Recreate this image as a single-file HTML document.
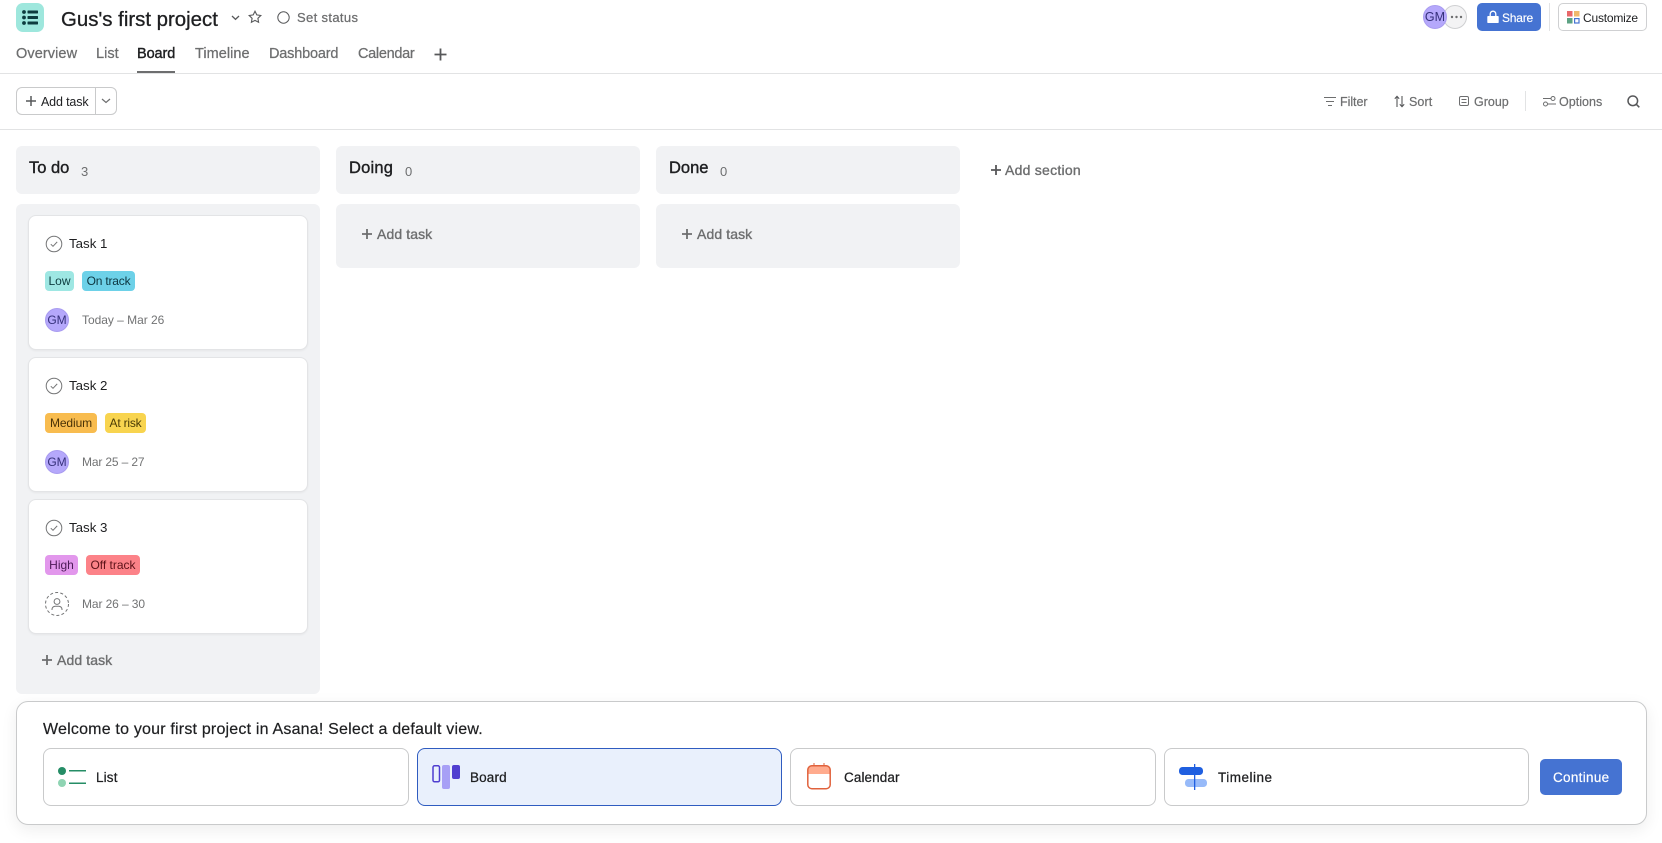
<!DOCTYPE html>
<html lang="en"><head><meta charset="utf-8"><title>Gus's first project - Asana</title>
<style>
*{box-sizing:border-box}
html,body{margin:0;padding:0;background:#fff;width:1662px;height:843px;overflow:hidden}
body{position:relative;font-family:"Liberation Sans",sans-serif;color:#1e1f21}
.t{position:absolute;white-space:nowrap;line-height:20px;height:20px}
.b{position:absolute}
svg{position:absolute;overflow:visible}
.tab{font-size:14.5px;color:#6d6e6f;top:44px;-webkit-text-stroke:.25px}
.tool{font-size:12.5px;color:#6d6e6f;top:92px;-webkit-text-stroke:.2px}
.col{position:absolute;background:#f1f2f4;border-radius:6px}
.card{position:absolute;left:28px;width:280px;height:135px;background:#fff;border:1px solid #e3e4e6;border-radius:8px;box-shadow:0 1px 2px rgba(0,0,0,.05)}
.tn{font-size:13.3px;color:#1e1f21}
.tag{position:absolute;height:20px;border-radius:4px;font-size:12px;line-height:20px;text-align:center;white-space:nowrap}
.av{position:absolute;left:45px;width:24px;height:24px;border-radius:50%;background:#b5a8fb;border:1px solid #a99cf0;color:#35307a;font-size:12px;line-height:22px;text-align:center}
.d{font-size:12px;color:#727374;letter-spacing:-.03px}
.sec{font-size:16.5px;color:#1e1f21;-webkit-text-stroke:.4px;top:158px}
.cnt{font-size:13px;color:#6d6e6f;top:162px}
.add{font-size:14px;color:#6d6e6f;-webkit-text-stroke:.35px;letter-spacing:.1px}
.opt{position:absolute;top:748px;height:58px;border:1px solid #c9cacb;border-radius:8px;background:#fff}
.ol{font-size:13.5px;color:#1e1f21;top:768px;-webkit-text-stroke:.25px}
</style></head>
<body>
<!-- logo -->
<div class="b" style="left:16px;top:3px;width:28px;height:29px;border-radius:7px;background:#9ee7dd"></div>
<svg style="left:16px;top:3px" width="28" height="29" fill="#0d3b3e"><circle cx="8" cy="9" r="1.900"/><circle cx="8" cy="14.500" r="1.900"/><circle cx="8" cy="20" r="1.900"/><rect x="11.500" y="7.500" width="10.500" height="3" rx=".6"/><rect x="11.500" y="13" width="10.500" height="3" rx=".6"/><rect x="11.500" y="18.500" width="10.500" height="3" rx=".6"/></svg>
<div class="t" style="left:61px;top:10px;font-size:20.400px;-webkit-text-stroke:.3px;line-height:20px">Gus's first project</div>
<svg style="left:231px;top:15px" width="9" height="6" fill="none" stroke="#57585a" stroke-width="1.300"><path d="M1 1l3.500 3.300L8 1"/></svg>
<svg style="left:248px;top:10px" width="14" height="14" fill="none" stroke="#57585a" stroke-width="1.100"><path d="M7 1.200l1.800 3.700 4 .6-2.900 2.800.7 4L7 10.400l-3.600 1.900.7-4L1.200 5.500l4-.6z"/></svg>
<svg style="left:277px;top:11px" width="13" height="13" fill="none" stroke="#57585a" stroke-width="1"><circle cx="6.500" cy="6.500" r="5.700"/></svg>
<div class="t" style="left:297px;top:8px;font-size:13px;color:#6d6e6f;-webkit-text-stroke:.25px;letter-spacing:.35px">Set status</div>

<div class="t tab" style="left:16px;letter-spacing:.09px">Overview</div>
<div class="t tab" style="left:96px;letter-spacing:.05px">List</div>
<div class="t tab" style="left:137px;color:#1e1f21;-webkit-text-stroke:.4px;letter-spacing:-.1px">Board</div>
<div class="t tab" style="left:195px;letter-spacing:.04px">Timeline</div>
<div class="t tab" style="left:269px;letter-spacing:-.18px">Dashboard</div>
<div class="t tab" style="left:358px;letter-spacing:-.3px">Calendar</div>
<svg style="left:433px;top:47px" width="15" height="15" stroke="#57585a" stroke-width="1.800"><path d="M7.500 1.500v12M1.500 7.500h12"/></svg>
<div class="b" style="left:0;top:73px;width:1662px;height:1px;background:#e2e3e4"></div>
<div class="b" style="left:137px;top:71px;width:38px;height:2px;background:#6d6e6f"></div>

<!-- header right -->
<div class="b" style="left:1443px;top:5px;width:24px;height:24px;border-radius:50%;background:#f3f3f4;border:1px solid #cfd0d2"></div>
<svg style="left:1449px;top:15px" width="14" height="4" fill="#6d6e6f"><circle cx="3" cy="2" r="1.200"/><circle cx="7.500" cy="2" r="1.200"/><circle cx="12" cy="2" r="1.200"/></svg>
<div class="av" style="left:1423px;top:5px;line-height:22px;font-size:12.500px">GM</div>
<div class="b" style="left:1477px;top:3px;width:64px;height:28px;border-radius:5px;background:#4573d2"></div>
<svg style="left:1487px;top:10px" width="12" height="14" fill="#fff"><rect x=".3" y="6" width="11.400" height="7" rx=".8"/><path d="M3.200 6.500V4a2.800 2.800 0 0 1 5.600 0v2.500" fill="none" stroke="#fff" stroke-width="1.300"/></svg>
<div class="t" style="left:1502px;top:8px;font-size:12px;color:#fff;-webkit-text-stroke:.15px;letter-spacing:-.2px">Share</div>
<div class="b" style="left:1549px;top:3px;width:1px;height:28px;background:#e2e3e4"></div>
<div class="b" style="left:1558px;top:3px;width:89px;height:28px;border-radius:5px;border:1px solid #cfd0d2;background:#fff"></div>
<svg style="left:1567px;top:11px" width="13" height="13"><rect width="5.500" height="5.500" fill="#e8686a"/><rect x="7" width="5.500" height="5.500" fill="#f0b96b"/><rect y="7" width="5.500" height="5.500" fill="#5da283"/><rect x="7.600" y="7.600" width="4.400" height="4.400" fill="none" stroke="#4573d2" stroke-width="1.200"/></svg>
<div class="t" style="left:1583px;top:8px;font-size:12px;letter-spacing:-.2px">Customize</div>

<!-- toolbar -->
<div class="b" style="left:16px;top:87px;width:101px;height:28px;border:1px solid #c9cacb;border-radius:6px;background:#fff"></div>
<div class="b" style="left:95px;top:87px;width:1px;height:28px;background:#c9cacb"></div>
<svg style="left:25px;top:95px" width="12" height="12" stroke="#57585a" stroke-width="1.500"><path d="M6 1v10M1 6h10"/></svg>
<div class="t" style="left:41px;top:92px;font-size:12.500px;letter-spacing:-.15px">Add task</div>
<svg style="left:101px;top:98px" width="10" height="6" fill="none" stroke="#6d6e6f" stroke-width="1.200"><path d="M1 1l4 3.500L9 1"/></svg>

<svg style="left:1324px;top:96px" width="12" height="11" stroke="#6d6e6f" stroke-width="1.100"><path d="M0 1.500h12M2 5.500h8M4 9.500h4"/></svg>
<div class="t tool" style="left:1340px;letter-spacing:-.05px">Filter</div>
<svg style="left:1394px;top:95px" width="11" height="13" fill="none" stroke="#57585a" stroke-width="1.100"><path d="M3 12V1.500M.8 3.700L3 1.300l2.200 2.400M8 1v10.500M5.800 9.300L8 11.700l2.200-2.400"/></svg>
<div class="t tool" style="left:1409px;letter-spacing:.1px">Sort</div>
<svg style="left:1459px;top:96px" width="10" height="10" fill="none" stroke="#6d6e6f" stroke-width="1"><rect x=".5" y=".5" width="9" height="9" rx="1.500"/><path d="M2.500 3.500h5M2.500 6.500h5"/></svg>
<div class="t tool" style="left:1474px">Group</div>
<div class="b" style="left:1525px;top:91px;width:1px;height:20px;background:#e2e3e4"></div>
<svg style="left:1543px;top:96px" width="13" height="11" fill="none" stroke="#6d6e6f" stroke-width="1"><circle cx="10" cy="2.500" r="2"/><circle cx="2.500" cy="8" r="2"/><path d="M0 2.500h8M5 8h8"/></svg>
<div class="t tool" style="left:1559px;letter-spacing:.02px">Options</div>
<svg style="left:1627px;top:95px" width="13" height="13" fill="none" stroke="#57585a" stroke-width="1.500"><circle cx="5.800" cy="5.800" r="4.800"/><path d="M9.300 9.300l3 3"/></svg>
<div class="b" style="left:0;top:129px;width:1662px;height:1px;background:#e2e3e4"></div>

<!-- columns -->
<div class="col" style="left:16px;top:146px;width:304px;height:48px"></div>
<div class="col" style="left:16px;top:204px;width:304px;height:490px"></div>
<div class="col" style="left:336px;top:146px;width:304px;height:48px"></div>
<div class="col" style="left:336px;top:204px;width:304px;height:64px"></div>
<div class="col" style="left:656px;top:146px;width:304px;height:48px"></div>
<div class="col" style="left:656px;top:204px;width:304px;height:64px"></div>
<div class="t sec" style="left:29px">To do</div>
<div class="t cnt" style="left:81px">3</div>
<div class="t sec" style="left:349px;letter-spacing:.2px">Doing</div>
<div class="t cnt" style="left:405px">0</div>
<div class="t sec" style="left:669px">Done</div>
<div class="t cnt" style="left:720px">0</div>

<svg style="left:361px;top:228px" width="12" height="12" stroke="#6d6e6f" stroke-width="1.800"><path d="M6 1v10M1 6h10"/></svg>
<div class="t add" style="left:377px;top:224px">Add task</div>
<svg style="left:681px;top:228px" width="12" height="12" stroke="#6d6e6f" stroke-width="1.800"><path d="M6 1v10M1 6h10"/></svg>
<div class="t add" style="left:697px;top:224px">Add task</div>
<svg style="left:990px;top:164px" width="12" height="12" stroke="#57585a" stroke-width="1.800"><path d="M6 1v10M1 6h10"/></svg>
<div class="t add" style="left:1005px;top:160px;letter-spacing:.25px">Add section</div>
<svg style="left:41px;top:654px" width="12" height="12" stroke="#6d6e6f" stroke-width="1.800"><path d="M6 1v10M1 6h10"/></svg>
<div class="t add" style="left:57px;top:650px">Add task</div>

<!-- card 1 -->
<div class="card" style="top:215px"></div>
<svg style="left:45px;top:235px" width="18" height="18" fill="none" stroke="#747576" stroke-width="1"><circle cx="9" cy="9" r="7.800"/><path d="M5.800 9.200l2.200 2.100 4.200-4.400"/></svg>
<div class="t tn" style="left:69px;top:234px">Task 1</div>
<div class="tag" style="left:45px;top:271px;width:29px;background:#9ee7e3;color:#0d3b3e">Low</div>
<div class="tag" style="left:82px;top:271px;width:53px;background:#6dd1e8;color:#0d3640;letter-spacing:-.2px">On track</div>
<div class="av" style="top:308px">GM</div>
<div class="t d" style="left:82px;top:310px">Today – Mar 26</div>

<!-- card 2 -->
<div class="card" style="top:357px"></div>
<svg style="left:45px;top:377px" width="18" height="18" fill="none" stroke="#747576" stroke-width="1"><circle cx="9" cy="9" r="7.800"/><path d="M5.800 9.200l2.200 2.100 4.200-4.400"/></svg>
<div class="t tn" style="left:69px;top:376px">Task 2</div>
<div class="tag" style="left:45px;top:413px;width:52px;background:#f8bc4f;color:#4a3206;letter-spacing:-.1px">Medium</div>
<div class="tag" style="left:105px;top:413px;width:41px;background:#f8d44f;color:#4a3c06;letter-spacing:-.2px">At risk</div>
<div class="av" style="top:450px">GM</div>
<div class="t d" style="left:82px;top:452px;letter-spacing:-.15px">Mar 25 – 27</div>

<!-- card 3 -->
<div class="card" style="top:499px"></div>
<svg style="left:45px;top:519px" width="18" height="18" fill="none" stroke="#747576" stroke-width="1"><circle cx="9" cy="9" r="7.800"/><path d="M5.800 9.200l2.200 2.100 4.200-4.400"/></svg>
<div class="t tn" style="left:69px;top:518px">Task 3</div>
<div class="tag" style="left:45px;top:555px;width:33px;background:#e297ec;color:#4c1a57">High</div>
<div class="tag" style="left:86px;top:555px;width:54px;background:#fc8288;color:#5c1218">Off track</div>
<svg style="left:45px;top:592px" width="24" height="24" fill="none" stroke="#747576" stroke-width="1"><circle cx="12" cy="12" r="11.500" stroke-dasharray="3 2.200"/><circle cx="12" cy="9.500" r="2.900"/><path d="M7 18v-.6a3.200 3.200 0 0 1 3.200-3.200h3.600a3.200 3.200 0 0 1 3.200 3.200v.6"/></svg>
<div class="t d" style="left:82px;top:594px;letter-spacing:-.1px">Mar 26 – 30</div>

<!-- welcome bar -->
<div class="b" style="left:16px;top:701px;width:1631px;height:124px;border:1px solid #c9cacb;border-radius:12px;background:#fff;box-shadow:0 5px 16px rgba(0,0,0,.07)"></div>
<div class="t" style="left:43px;top:720px;font-size:16px;-webkit-text-stroke:.2px;letter-spacing:.2px">Welcome to your first project in Asana! Select a default view.</div>

<div class="opt" style="left:43px;width:366px"></div>
<svg style="left:58px;top:767px" width="28" height="22"><circle cx="4" cy="4" r="4" fill="#258d66"/><circle cx="4" cy="16" r="4" fill="#8fd4b3"/><rect x="11" y="3" width="17" height="1.500" fill="#258d66"/><rect x="11" y="15.500" width="17" height="1.500" fill="#258d66"/></svg>
<div class="t ol" style="left:96px;letter-spacing:.15px">List</div>

<div class="opt" style="left:417px;width:365px;background:#e9f0fc;border-color:#2f5cc0"></div>
<svg style="left:432px;top:763px" width="29" height="28"><rect x="1" y="2.800" width="6.500" height="16" rx="1.500" fill="none" stroke="#4f3ed0" stroke-width="1.500"/><rect x="10" y="2" width="8" height="24" rx="2" fill="#a7a0f6"/><rect x="20" y="2" width="8" height="14" rx="2" fill="#4f3ed0"/></svg>
<div class="t ol" style="left:470px;letter-spacing:.15px">Board</div>

<div class="opt" style="left:790px;width:366px"></div>
<svg style="left:807px;top:762px" width="24" height="28"><path d="M7 1v6M17 1v6" stroke="#e0623c" stroke-width="1"/><path d="M1 12V7a3 3 0 0 1 3-3h16a3 3 0 0 1 3 3v5H1z" fill="#ffab8e"/><rect x=".8" y="3.800" width="22.400" height="22.900" rx="4" fill="none" stroke="#e0623c" stroke-width="1.500"/></svg>
<div class="t ol" style="left:844px;letter-spacing:.1px">Calendar</div>

<div class="opt" style="left:1164px;width:365px"></div>
<svg style="left:1179px;top:763px" width="29" height="28"><rect x="0" y="4" width="24" height="8" rx="3.500" fill="#1f5fe0"/><rect x="6" y="16" width="22" height="8" rx="3.500" fill="#97baf9"/><rect x="15" y="1" width="1.300" height="26" fill="#1f5fe0"/></svg>
<div class="t ol" style="left:1218px;letter-spacing:.5px">Timeline</div>

<div class="b" style="left:1540px;top:759px;width:82px;height:36px;border-radius:5px;background:#4573d2"></div>
<div class="t" style="left:1553px;top:768px;font-size:13.500px;color:#fff;-webkit-text-stroke:.2px;letter-spacing:.3px">Continue</div>
</body></html>
